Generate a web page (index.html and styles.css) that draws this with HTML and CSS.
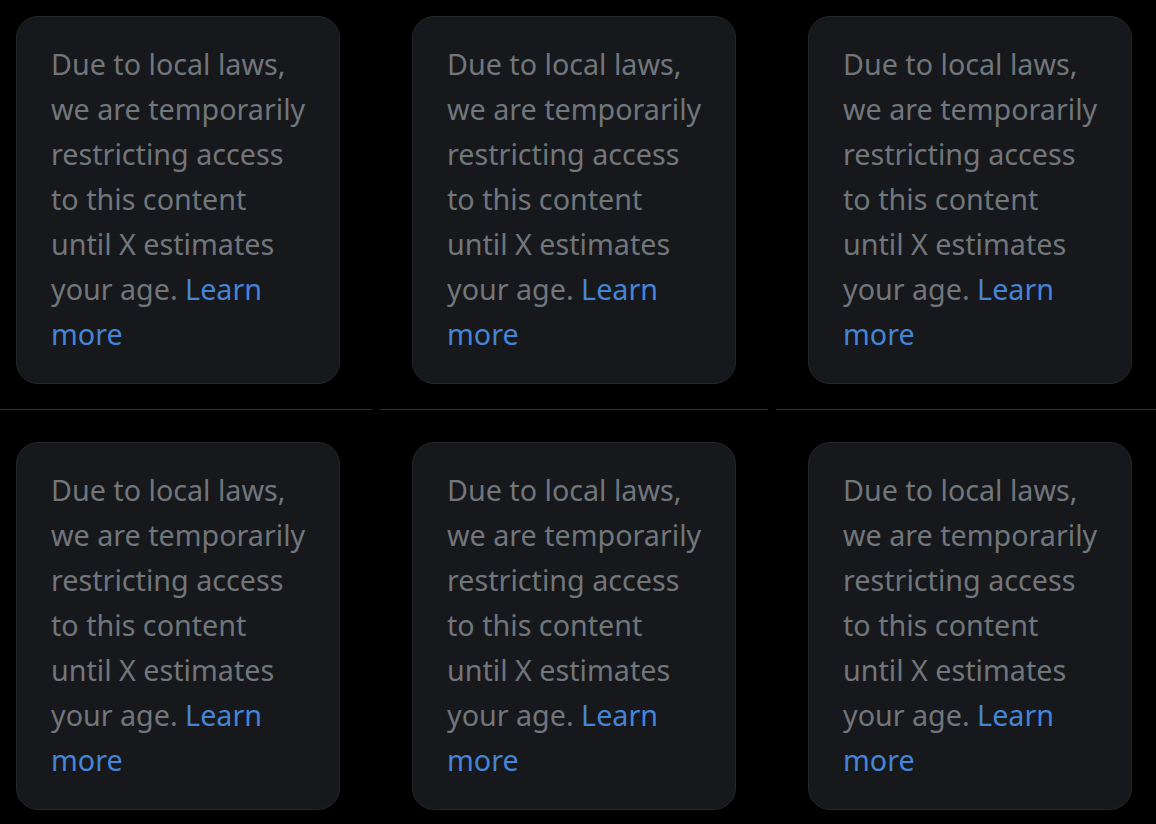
FILE: index.html
```html
<!DOCTYPE html>
<html lang="en">
<head>
<meta charset="utf-8">
<title>Restricted content</title>
<link rel="stylesheet" href="styles.css">
</head>
<body>
<div class="grid">
  <div class="cell cell-first row-top"><div class="card"><p class="msg">Due to local laws, we are temporarily restricting access to this content until X estimates your age. <a class="link" href="#">Learn more</a></p></div></div>
  <div class="cell row-top"><div class="card"><p class="msg">Due to local laws, we are temporarily restricting access to this content until X estimates your age. <a class="link" href="#">Learn more</a></p></div></div>
  <div class="cell row-top"><div class="card"><p class="msg">Due to local laws, we are temporarily restricting access to this content until X estimates your age. <a class="link" href="#">Learn more</a></p></div></div>
  <div class="cell cell-first row-bottom"><div class="card"><p class="msg">Due to local laws, we are temporarily restricting access to this content until X estimates your age. <a class="link" href="#">Learn more</a></p></div></div>
  <div class="cell row-bottom"><div class="card"><p class="msg">Due to local laws, we are temporarily restricting access to this content until X estimates your age. <a class="link" href="#">Learn more</a></p></div></div>
  <div class="cell row-bottom"><div class="card"><p class="msg">Due to local laws, we are temporarily restricting access to this content until X estimates your age. <a class="link" href="#">Learn more</a></p></div></div>
</div>
</body>
</html>
```
FILE: styles.css
```css
html, body {
  margin: 0;
  padding: 0;
  background: #000;
  height: 100%;
  overflow: hidden;
}
body {
  font-family: "Noto Sans", "Open Sans", sans-serif;
}
.grid {
  display: grid;
  grid-template-columns: 372px 388px 380px;
  column-gap: 8px;
}
.cell {
  padding-left: 32px;
}
.cell-first {
  padding-left: 16px;
}
.row-top {
  padding-top: 16px;
  padding-bottom: 25px;
  border-bottom: 1px solid #2f3336;
}
.row-bottom {
  padding-top: 32px;
}
.card {
  box-sizing: border-box;
  width: 324px;
  height: 368px;
  background: #16181c;
  border: 1px solid #24262b;
  border-radius: 22px;
  padding: 24px 31px 26px 34px;
}
.msg {
  margin: 0;
  font-size: 28.7px;
  line-height: 45px;
  color: #71767b;
}
.link {
  color: #4585d8;
  text-decoration: none;
}
```
